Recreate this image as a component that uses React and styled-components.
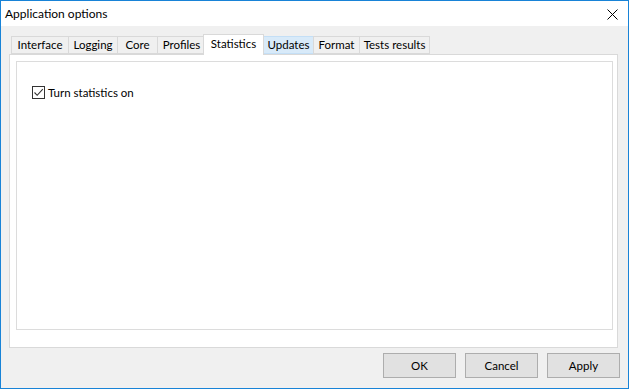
import styled, { createGlobalStyle } from "styled-components";

const Global = createGlobalStyle`
  html, body { margin: 0; padding: 0; background: #ffffff; }
  * { box-sizing: border-box; }
  body { font-family: "Segoe UI", Lato, "Noto Sans", sans-serif; font-size: 11.5px; color: #000; }
`;

const tabs = [
    { label: "Interface", width: 58 },
    { label: "Logging", width: 50 },
    { label: "Core", width: 41 },
    { label: "Profiles", width: 49 },
    { label: "Statistics", width: 61, active: true },
    { label: "Updates", width: 51, hover: true },
    { label: "Format", width: 47 },
    { label: "Tests results", width: 71 },
];

const CloseIcon = () => (
    <svg width="11" height="11" viewBox="0 0 11 11">
        <path d="M0.5 0.5 L10.5 10.5 M10.5 0.5 L0.5 10.5" stroke="#000" strokeWidth="1" fill="none" />
    </svg>
);

const CheckMark = () => (
    <svg width="11" height="11" viewBox="0 0 11 11">
        <path d="M1.5 5.5 L4.2 8.3 L9.8 2.2" stroke="#333" strokeWidth="1.1" fill="none" />
    </svg>
);

const App = () => {
    return (
        <>
            <Global />
            <Window>
                <TitleBar>
                    <Title>Application options</Title>
                    <CloseButton><CloseIcon /></CloseButton>
                </TitleBar>
                <Body>
                    <TabStrip>
                        {tabs.map((t) => (
                            <Tab key={t.label} $w={t.width} $active={t.active} $hover={t.hover}>
                                {t.label}
                            </Tab>
                        ))}
                    </TabStrip>
                    <Panel>
                        <GroupBox>
                            <CheckRow>
                                <CheckBox><CheckMark /></CheckBox>
                                <span>Turn statistics on</span>
                            </CheckRow>
                        </GroupBox>
                    </Panel>
                    <ButtonRow>
                        <Button>OK</Button>
                        <Button>Cancel</Button>
                        <Button>Apply</Button>
                    </ButtonRow>
                </Body>
            </Window>
        </>
    )
}

const Window = styled.div`
    width: 629px;
    height: 389px;
    border: 1px solid #1883d7;
    display: flex;
    flex-direction: column;
    background: #f0f0f0;
`
const TitleBar = styled.div`
    height: 25px;
    background: #ffffff;
    display: flex;
    align-items: center;
    justify-content: space-between;
    padding: 0 10px 0 4px;
`
const Title = styled.div`
    font-size: 12px;
    padding-bottom: 1px;
`
const CloseButton = styled.div`
    display: flex;
    align-items: center;
    padding-top: 1px;
`
const Body = styled.div`
    flex: 1;
    display: flex;
    flex-direction: column;
    padding: 8px 8px 9px 8px;
`
const TabStrip = styled.div`
    display: flex;
    align-items: flex-end;
    height: 20px;
    padding-left: 2px;
    position: relative;
    z-index: 1;
`
const Tab = styled.div`
    width: ${(p) => p.$w}px;
    height: ${(p) => (p.$active ? 21 : 18)}px;
    margin-left: ${(p) => (p.$active ? -3 : -1)}px;
    margin-bottom: ${(p) => (p.$active ? -1 : 0)}px;
    padding: ${(p) => (p.$active ? "0 0 3px" : "0 0 1px")};
    border: 1px solid ${(p) => (p.$hover ? "#c4dff6" : "#d9d9d9")};
    border-bottom: ${(p) => (p.$active ? "none" : "")};
    background: ${(p) => (p.$active ? "#ffffff" : p.$hover ? "#d8eaf9" : "#f0f0f0")};
    position: relative;
    z-index: ${(p) => (p.$active ? 2 : 1)};
    display: flex;
    align-items: center;
    justify-content: center;
    white-space: nowrap;
    &:first-child { margin-left: 0; }
`
const Panel = styled.div`
    height: 294px;
    margin-right: 2px;
    background: #ffffff;
    border: 1px solid #d9d9d9;
    padding: 6px 4px 17px 6px;
    display: flex;
`
const GroupBox = styled.div`
    flex: 1;
    border: 1px solid #dcdcdc;
    background: #ffffff;
    padding: 24px 15px;
`
const CheckRow = styled.div`
    display: flex;
    align-items: center;
    gap: 3px;
`
const CheckBox = styled.div`
    width: 13px;
    height: 13px;
    border: 1px solid #333333;
    background: #ffffff;
    display: flex;
    align-items: center;
    justify-content: center;
`
const ButtonRow = styled.div`
    display: flex;
    justify-content: flex-end;
    gap: 9px;
    margin-top: 5px;
`
const Button = styled.div`
    width: 73px;
    height: 25px;
    background: #e1e1e1;
    border: 1px solid #adadad;
    display: flex;
    align-items: center;
    justify-content: center;
    padding-bottom: 1px;
`

export default App;
